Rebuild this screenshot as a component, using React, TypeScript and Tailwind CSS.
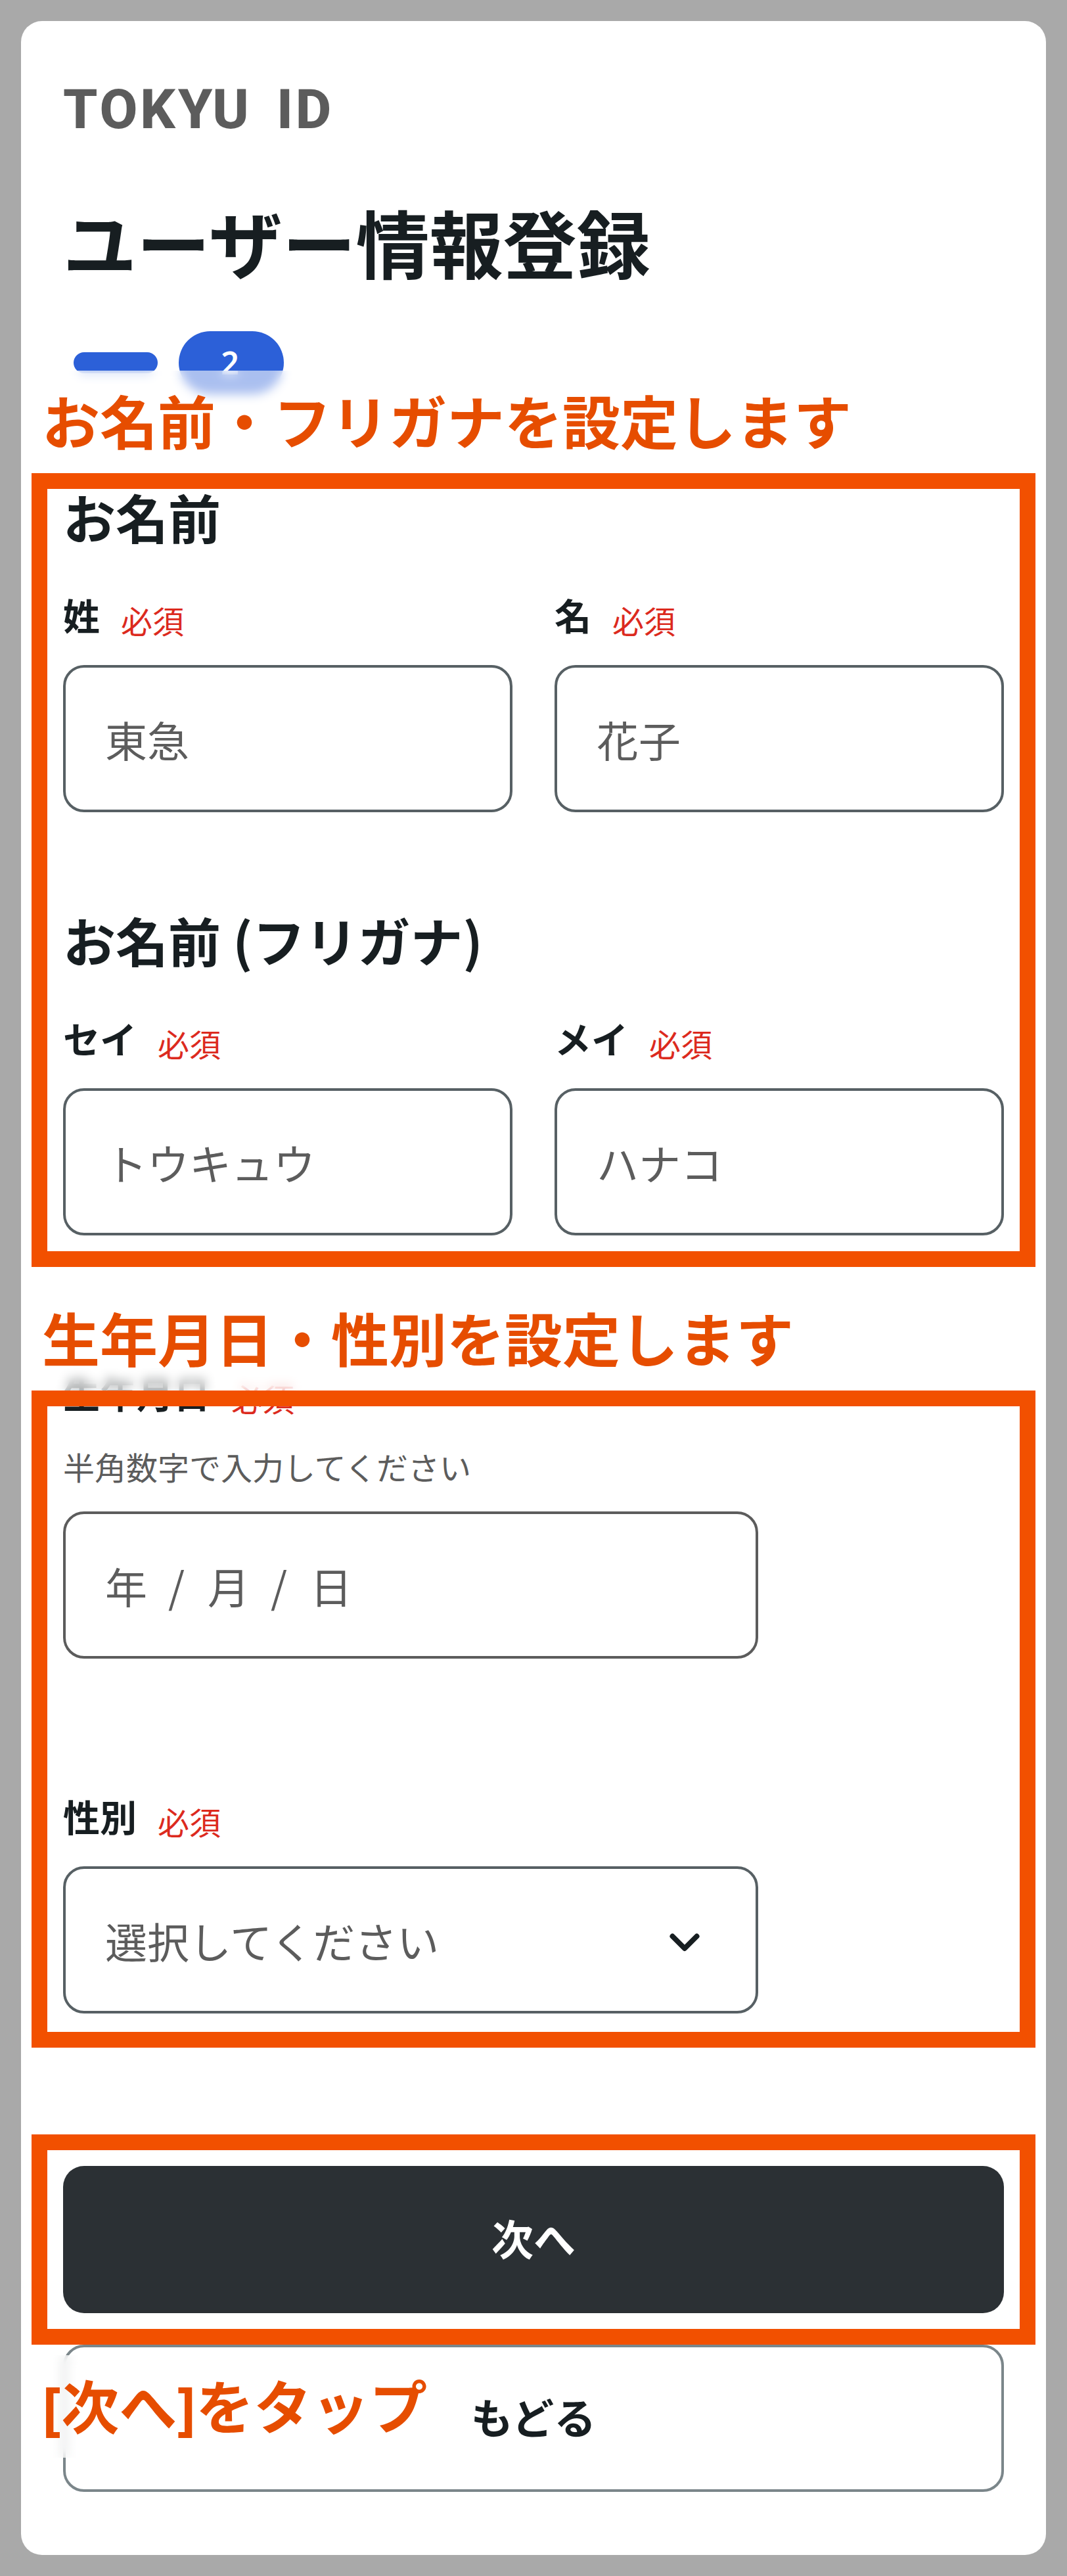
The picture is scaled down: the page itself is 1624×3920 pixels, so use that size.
import type { ReactNode } from 'react'

interface FieldLabelProps {
  text: string
  className?: string
}

/**
 * Field label with the "required" mark
 */
function FieldLabel({ text, className = '' }: FieldLabelProps) {
  return (
    <div className={'flex items-start gap-8 leading-none ' + className}>
      <span className="text-[56px] leading-none font-bold">{text}</span>
      <span className="mt-3 text-5xl leading-none text-[#dc2a1e]">必須</span>
    </div>
  )
}

/**
 * Labelled text box
 */
function TextField({ label, placeholder }: { label: string; placeholder: string }) {
  return (
    <div className="flex-1">
      <FieldLabel text={label} />
      <div className="mt-[45px] flex h-56 items-center rounded-[32px] border-4 border-[#576064] px-15 text-[64px] leading-none text-[#5c5c5c]">
        {placeholder}
      </div>
    </div>
  )
}

/**
 * Orange frame drawn over a step of the guide
 */
function Frame() {
  return <div className="pointer-events-none absolute inset-0 border-24 border-[#f25000]" />
}

/**
 * Guide caption on a frosted strip
 */
function Caption({ children, className }: { children: ReactNode; className: string }) {
  return (
    <div
      className={
        "absolute left-0 z-10 flex h-[156px] items-center bg-white/60 px-4 font-['Noto_Sans','Noto_Sans_CJK_JP',sans-serif] text-[88px] leading-none font-bold whitespace-nowrap text-[#e64d00] backdrop-blur-[8px] " +
        className
      }
    >
      {children}
    </div>
  )
}

export default function App() {
  return (
    <div
      lang="ja"
      className="h-[3920px] w-[1624px] bg-[#a9a9a9] p-8 font-['Noto_Sans_CJK_JP',sans-serif] text-[#171e21]"
    >
      <main className="flex h-full flex-col rounded-[32px] bg-white px-4 pt-[93px]">
        {/* Header */}
        <header className="px-12">
          <div className="font-[Roboto,sans-serif] text-[84px] leading-none font-extrabold tracking-[4px] text-[#5c5c5c] [word-spacing:13px]">
            TOKYU ID
          </div>
          <h1 className="mt-[102px] text-[112px] leading-none font-bold">ユーザー情報登録</h1>
          <div className="mt-[81px] ml-4 flex items-center gap-8">
            <span className="h-8 w-32 rounded-full bg-[#2c60d8]" />
            <span className="flex h-24 w-40 items-center justify-center rounded-full bg-[#2c60d8] pr-1 font-['Noto_Sans',sans-serif] text-5xl leading-none font-semibold text-white">
              2
            </span>
          </div>
        </header>

        {/* Name */}
        <section className="relative mt-[120px] flex h-[1208px] flex-col px-12 pt-[25px]">
          <h2 className="text-[80px] leading-none font-bold">お名前</h2>
          <div className="mt-[82px] flex gap-16">
            <TextField label="姓" placeholder="東急" />
            <TextField label="名" placeholder="花子" />
          </div>
          <h2 className="mt-[153px] text-[80px] leading-none font-bold">お名前 (フリガナ)</h2>
          <div className="mt-[82px] flex gap-16">
            <TextField label="セイ" placeholder="トウキュウ" />
            <TextField label="メイ" placeholder="ハナコ" />
          </div>
          <Frame />
          <Caption className="bottom-full">お名前・フリガナを設定します</Caption>
        </section>

        {/* Birthday and gender */}
        <section className="relative mt-[188px] flex h-[1000px] flex-col px-12">
          <FieldLabel text="生年月日" className="-mt-[25px]" />
          <p className="mt-14 text-5xl leading-none text-[#5c5c5c]">半角数字で入力してください</p>
          <div className="mt-[45px] flex h-56 w-[1058px] items-center gap-8 rounded-[32px] border-4 border-[#5c5c5c] px-15 text-[64px] leading-none text-[#5c5c5c]">
            <span>年</span>
            <span className="w-7">/</span>
            <span>月</span>
            <span className="w-7">/</span>
            <span>日</span>
          </div>

          <FieldLabel text="性別" className="mt-[211px]" />
          <div className="mt-[45px] flex h-56 w-[1058px] items-center justify-between rounded-[32px] border-4 border-[#576064] pr-[84px] pl-15 text-[64px] leading-none text-[#5c5c5c]">
            <span>選択してください</span>
            <svg
              className="mt-2 h-8 w-12"
              viewBox="0 0 48 32"
              fill="none"
              stroke="#171e21"
              strokeWidth="8"
              strokeLinecap="round"
              strokeLinejoin="round"
            >
              <path d="M5.5 6.5 24 25 42.5 6.5" />
            </svg>
          </div>
          <Frame />
          <Caption className="bottom-full">生年月日・性別を設定します</Caption>
        </section>

        {/* Actions */}
        <section className="relative mt-[132px] px-12 py-12">
          <button className="flex h-56 w-full items-center justify-center rounded-[32px] bg-[#2b3034] font-['Noto_Sans','Noto_Sans_CJK_JP',sans-serif] text-[64px] leading-none font-bold text-white">
            次へ
          </button>
          <Frame />
          <Caption className="top-[336px]">[次へ]をタップ</Caption>
        </section>
        <div className="px-12">
          <button className="flex h-56 w-full items-center justify-center rounded-[32px] border-4 border-[#7b868a] font-['Noto_Sans','Noto_Sans_CJK_JP',sans-serif] text-[64px] leading-none font-bold">
            もどる
          </button>
        </div>
      </main>
    </div>
  )
}
